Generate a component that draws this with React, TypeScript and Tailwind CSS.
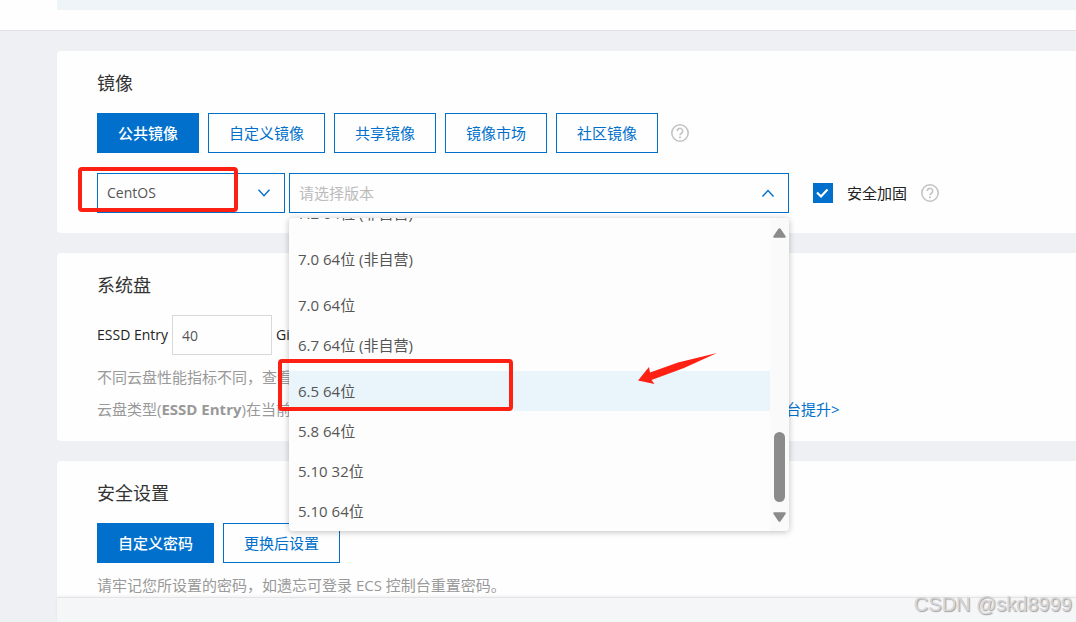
// App.tsx — image, system disk and security settings of an ECS instance

import type { ReactNode } from "react";

const imageTypes = ["公共镜像", "自定义镜像", "共享镜像", "镜像市场", "社区镜像"];

// Versions are listed in blocks with a small gap between them
const versionGroups = [
  ["7.2 64位 (非自营)"],
  ["7.0 64位 (非自营)"],
  ["7.0 64位", "6.7 64位 (非自营)"],
  ["6.5 64位", "5.8 64位", "5.10 32位", "5.10 64位"],
];

const hoveredVersion = "6.5 64位";

function TabButton({ active, children }: { active?: boolean; children: ReactNode }) {
  return (
    <button
      type="button"
      className={
        active
          ? "h-10 px-5 border border-[#0070cc] bg-[#0070cc] text-white font-medium whitespace-nowrap cursor-pointer"
          : "h-10 px-5 border border-[#0070cc] bg-[#fefefe] text-[#0070cc] whitespace-nowrap cursor-pointer"
      }
    >
      {children}
    </button>
  );
}

function HelpIcon() {
  return (
    <svg viewBox="0 0 18 18" className="w-[18px] h-[18px] shrink-0" fill="none" stroke="#c3c3c3" role="img" aria-label="帮助">
      <circle cx="9" cy="9" r="8.2" strokeWidth="1.6" />
      <path d="M6.3 7.1a2.7 2.7 0 1 1 4.3 2.1C9.6 9.9 9 10.3 9 11.3" strokeWidth="1.6" />
      <path d="M9 12.5v1.7" strokeWidth="1.8" />
    </svg>
  );
}

function Chevron({ up }: { up?: boolean }) {
  return (
    <svg
      viewBox="0 0 12 8"
      className="absolute right-[15px] top-4 w-3 h-2 pointer-events-none"
      fill="none"
      stroke="#0070cc"
      strokeWidth="1.4"
    >
      <path d={up ? "M.5 7.5 6 1.5 11.5 7.5" : "M.5.8 6 6.8 11.5.8"} />
    </svg>
  );
}

function Card({ title, className, children }: { title: string; className: string; children: ReactNode }) {
  return (
    <section className={`bg-[#fefefe] pl-10 pr-4 pt-5 ${className}`}>
      <h2 className="text-lg leading-6 text-[#333] mb-[18px]">{title}</h2>
      {children}
    </section>
  );
}

function VersionMenu() {
  return (
    <div className="absolute left-0 top-[45px] z-10 w-full h-[313px]">
      <div className="flex h-full bg-[#fdfdfd] rounded shadow-[0_1px_6px_rgba(0,0,0,0.25)] overflow-hidden">
        <div role="listbox" aria-label="版本" className="flex-1 flex flex-col justify-end gap-1.5 text-[#555]">
          {versionGroups.map((group) => (
            <ul key={group[0]} className="shrink-0">
              {group.map((version) => (
                <li
                  key={version}
                  role="option"
                  aria-selected={version === hoveredVersion}
                  className={
                    version === hoveredVersion
                      ? "h-10 leading-10 px-[9px] bg-[#e9f4fb]"
                      : "h-10 leading-10 px-[9px]"
                  }
                >
                  {version}
                </li>
              ))}
            </ul>
          ))}
        </div>

        {/* Scrollbar */}
        <div className="w-[19px] shrink-0 bg-[#fafafa] flex flex-col items-center pt-2.5 pb-[9px]">
          <svg viewBox="0 0 13 10" className="w-[13px] h-2.5" fill="#8b8b8b">
            <path d="M5.4.8Q6.5-.4 7.6.8L12.5 8Q13.2 9.6 11.8 9.7H1.2Q-.2 9.6.5 8Z" />
          </svg>
          <div className="flex-1" />
          <div className="w-[11px] h-[70px] rounded-full bg-[#8b8b8b] mb-2.5" />
          <svg viewBox="0 0 13 10" className="w-[13px] h-2.5" fill="#8b8b8b">
            <path d="M5.4 9.2Q6.5 10.4 7.6 9.2L12.5 2Q13.2.4 11.8.3H1.2Q-.2.4.5 2Z" />
          </svg>
        </div>
      </div>

      {/* Marks on the version to pick */}
      <div className="absolute -left-[11px] top-[141px] w-[235px] h-[52px] border-4 border-[#ff2014] rounded" />
      <svg viewBox="0 0 80 34" className="absolute left-[349px] top-[134px] w-20 h-[34px]" fill="#ff2014">
        <path d="M79 1 40 10.5 12 20.5 11 15 0 28.5 16.500 32 13.500 28 46 16Z" />
      </svg>
    </div>
  );
}

export default function App() {
  return (
    <div className="relative min-h-screen flex flex-col bg-[#eff0f4] text-[15px] text-[#222] font-['Open_Sans','Noto_Sans_CJK_SC',sans-serif]">
      <header className="h-[31px] shrink-0 bg-[#fefefe] border-b border-[#e1e2e4] pl-[57px]">
        <div className="h-2.5 bg-[#eef4f8]" />
      </header>

      <main className="pl-[57px] pt-5 flex flex-col gap-5">
        {/* Image */}
        <Card title="镜像" className="pb-5 rounded-l-sm">
          <div className="flex items-center gap-[9px]">
            {imageTypes.map((type, i) => (
              <TabButton key={type} active={i === 0}>
                {type}
              </TabButton>
            ))}
            <span className="pl-1">
              <HelpIcon />
            </span>
          </div>

          <div className="mt-5 flex items-center">
            <div className="relative w-[188px] shrink-0">
              <select
                aria-label="操作系统"
                className="appearance-none w-full h-10 px-[9px] border border-[#0070cc] bg-transparent text-sm text-[#555] outline-none"
              >
                <option>CentOS</option>
              </select>
              <Chevron />
              <div className="absolute -left-[19px] -top-1.5 w-40 h-[45px] border-4 border-[#ff2014] rounded pointer-events-none" />
            </div>

            <div className="relative ml-1 w-[500px] shrink-0">
              <select
                aria-label="版本"
                className="appearance-none w-full h-10 px-[9px] border border-[#0070cc] bg-transparent text-[#bbb] outline-none"
              >
                <option>请选择版本</option>
              </select>
              <Chevron up />
              <VersionMenu />
            </div>

            <label className="ml-6 mr-3.5 flex items-center gap-3.5 whitespace-nowrap">
              <span className="relative w-5 h-5">
                <input type="checkbox" defaultChecked className="block appearance-none w-5 h-5 bg-[#0070cc]" />
                <svg
                  viewBox="0 0 20 20"
                  className="absolute inset-0 w-5 h-5 pointer-events-none"
                  fill="none"
                  stroke="#fff"
                  strokeWidth="2.2"
                >
                  <path d="M4 9.5 8 13.5 14.5 6.5" />
                </svg>
              </span>
              安全加固
            </label>
            <HelpIcon />
          </div>
        </Card>

        {/* System disk */}
        <Card title="系统盘" className="pb-4 rounded-l-sm">
          <div className="flex items-center gap-1 text-sm">
            <label htmlFor="disk-size">ESSD Entry</label>
            <input
              id="disk-size"
              type="text"
              defaultValue="40"
              className="w-[100px] h-10 px-[9px] border border-[#d8d8d8] bg-transparent text-[#555] outline-none"
            />
            <span>GiB</span>
          </div>
          <p className="mt-1.5 leading-8 text-[#999] whitespace-nowrap">不同云盘性能指标不同，查看各云盘性能指标</p>
          <p className="leading-8 text-[#999] whitespace-nowrap">
            云盘类型(<b>ESSD Entry</b>)在当前实例规格下的容量与性能上限以控制台展示为准，如需更高性能，
            <a href="#quota" className="text-[#0070cc]">
              前往控制台提升&gt;
            </a>
          </p>
        </Card>

        {/* Security */}
        <Card title="安全设置" className="rounded-tl-sm">
          <div className="flex gap-[9px]">
            <TabButton active>自定义密码</TabButton>
            <TabButton>更换后设置</TabButton>
          </div>
          <p className="mt-2.5 leading-6 text-[#999]">请牢记您所设置的密码，如遗忘可登录 ECS 控制台重置密码。</p>
        </Card>
      </main>

      <footer className="ml-[57px] min-h-[25px] flex-1 bg-[#f5f6f8] border-t border-[#e4e4e6] shadow-[0_-1px_3px_rgba(0,0,0,0.06)]" />

      <span className="absolute right-1 bottom-1.5 text-xl leading-6 font-['Liberation_Sans',sans-serif] text-[#d6d6d8] [text-shadow:1px_1px_1px_#a0a0a0]">
        CSDN @skd8999
      </span>
    </div>
  );
}
